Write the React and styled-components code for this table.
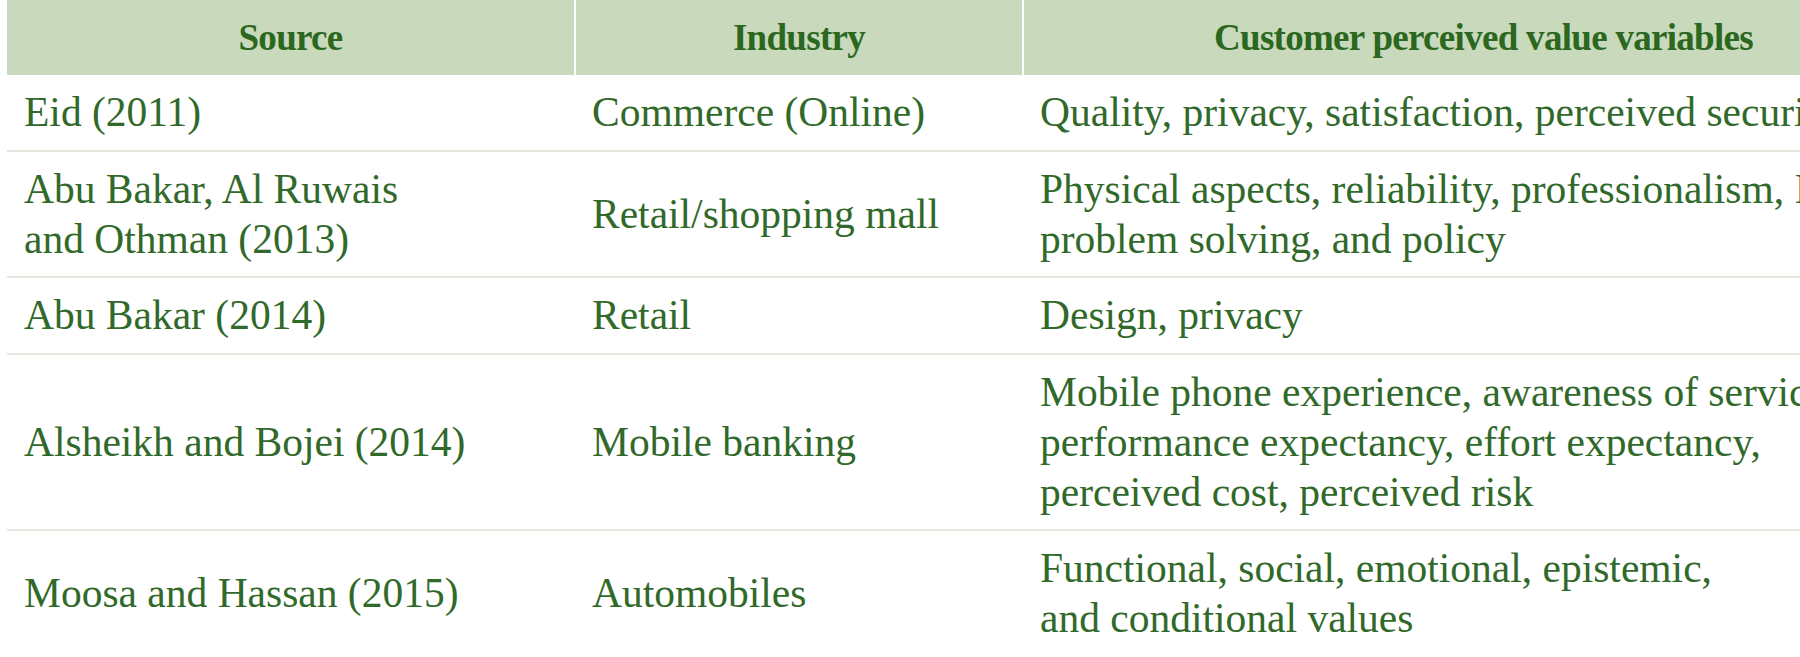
import React from "react";
import styled, { createGlobalStyle } from "styled-components";

const Global = createGlobalStyle`
  html, body {
    margin: 0;
    padding: 0;
    background: #ffffff;
    overflow: hidden;
  }
  body {
    font-family: "Liberation Serif", "Times New Roman", serif;
  }
`;

const Page = styled.div`
  width: 1800px;
  height: 657px;
  overflow: hidden;
  padding-left: 7px;
  box-sizing: border-box;
`;

const Table = styled.table`
  width: 1937px;
  table-layout: fixed;
  border-collapse: collapse;
  border-spacing: 0;
`;

const HeadCell = styled.th`
  height: 75px;
  padding: 0 10px;
  box-sizing: border-box;
  background: #c9dabc;
  color: #2c671f;
  font-family: "Liberation Serif", "Times New Roman", serif;
  font-weight: 700;
  font-size: 37px;
  letter-spacing: -0.7px;
  text-align: center;
  vertical-align: middle;
  border-right: 2px solid #ffffff;
  white-space: nowrap;
`;

const Row = styled.tr`
  border-bottom: 2px solid #e6e7df;
  &:last-child {
    border-bottom: none;
  }
`;

const Cell = styled.td`
  padding: 12px 17px 12.5px;
  color: #31692a;
  font-family: "Liberation Serif", "Times New Roman", serif;
  font-size: 41.5px;
  line-height: 50px;
  vertical-align: middle;
  white-space: nowrap;
  overflow: hidden;
`;

const rows = [
  {
    source: ["Eid (2011)"],
    industry: "Commerce (Online)",
    vars: ["Quality, privacy, satisfaction, perceived security, and trust"],
  },
  {
    source: ["Abu Bakar, Al Ruwais", "and Othman (2013)"],
    industry: "Retail/shopping mall",
    vars: [
      "Physical aspects, reliability, professionalism, Interaction,",
      "problem solving, and policy",
    ],
  },
  {
    source: ["Abu Bakar (2014)"],
    industry: "Retail",
    vars: ["Design, privacy"],
  },
  {
    source: ["Alsheikh and Bojei (2014)"],
    industry: "Mobile banking",
    vars: [
      "Mobile phone experience, awareness of services,",
      "performance expectancy, effort expectancy,",
      "perceived cost, perceived risk",
    ],
  },
  {
    source: ["Moosa and Hassan (2015)"],
    industry: "Automobiles",
    vars: [
      "Functional, social, emotional, epistemic,",
      "and conditional values",
    ],
  },
];

const Lines = ({ lines }) =>
  lines.map((l, i) => (
    <React.Fragment key={i}>
      {i > 0 && <br />}
      {l}
    </React.Fragment>
  ));

export default function App() {
  return (
    <>
      <Global />
      <Page>
        <Table>
          <colgroup>
            <col style={{ width: 568 }} />
            <col style={{ width: 448 }} />
            <col style={{ width: 921 }} />
          </colgroup>
          <thead>
            <tr>
              <HeadCell>Source</HeadCell>
              <HeadCell>Industry</HeadCell>
              <HeadCell>Customer perceived value variables</HeadCell>
            </tr>
          </thead>
          <tbody>
            {rows.map((r, i) => (
              <Row key={i}>
                <Cell>
                  <Lines lines={r.source} />
                </Cell>
                <Cell>{r.industry}</Cell>
                <Cell>
                  <Lines lines={r.vars} />
                </Cell>
              </Row>
            ))}
          </tbody>
        </Table>
      </Page>
    </>
  );
}
